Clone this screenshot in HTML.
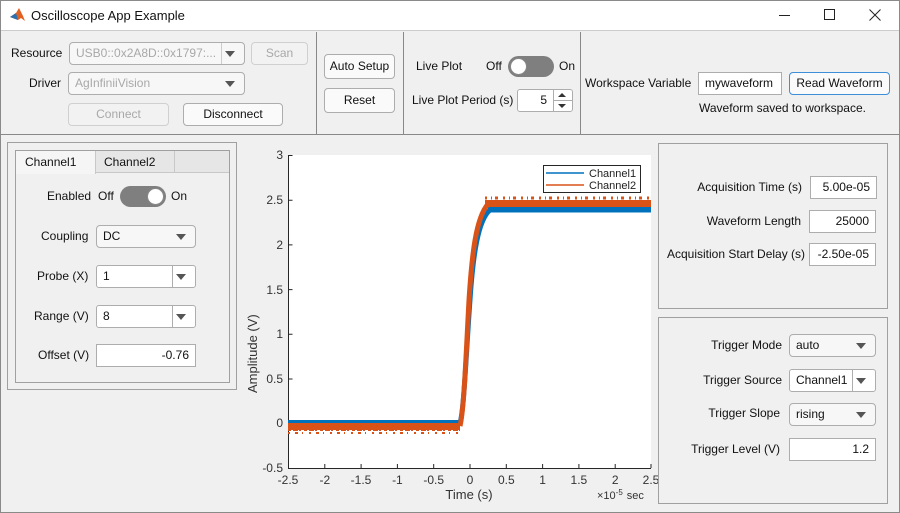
<!DOCTYPE html>
<html><head><style>
*{box-sizing:border-box;margin:0;padding:0}
body{width:900px;height:513px;background:#f0f0f0;font-family:"Liberation Sans",sans-serif;font-size:12px;color:#111;position:relative;overflow:hidden}
.a{position:absolute}
.win{left:0;top:0;width:900px;height:513px;border:1px solid #8a8a8a}
.btn{position:absolute;border:1px solid #adadad;border-radius:4px;background:#fafafa;text-align:center;line-height:21px;height:23px}
.dis{color:#a8a8a8;border-color:#d0d0d0;background:#f2f2f2}
.inp{position:absolute;background:#fff;border:1px solid #adadad;height:23px;line-height:21px;padding:0 6px}
.dd{position:absolute;border:1px solid #adadad;border-radius:4px;background:#f7f7f7;height:23px;line-height:21px;padding-left:6px}
.dd:after{content:"";position:absolute;right:9px;top:8px;border-left:5px solid transparent;border-right:5px solid transparent;border-top:6px solid #555}
.dd.split .sep{position:absolute;right:22px;top:0;bottom:0;border-left:1px solid #adadad}
.dd.white{background:#fff}
.lbl{position:absolute;white-space:nowrap}
.r{text-align:right}
.pan{position:absolute;border:1px solid #a0a0a0}
.tog{position:absolute;width:46px;height:21px;border-radius:11px;background:#7f7f7f}
.tog i{position:absolute;top:2px;width:17px;height:17px;border-radius:50%;background:#fff;border:1px solid #888}
</style></head><body>
<div class="a" style="left:0;top:0;width:900px;height:31px;background:#fff;border-bottom:1px solid #ccc"></div>
<svg class="a" style="left:9px;top:7px" width="17" height="16"><path d="M1 10 L7 6 L10 1 L14 9 L16 14 L12 11 L9 13 Z" fill="#e06020"/><path d="M1 10 L7 6 L9 13 Z" fill="#2a6fb0"/></svg>
<div class="lbl" style="left:31px;top:8px;font-size:13px">Oscilloscope App Example</div>
<div class="a" style="left:779px;top:15px;width:11px;height:1px;background:#222"></div>
<div class="a" style="left:824px;top:9px;width:11px;height:11px;border:1px solid #222"></div>
<svg class="a" style="left:869px;top:9px" width="12" height="12"><path d="M0.5 0.5L11.5 11.5M11.5 0.5L0.5 11.5" stroke="#222" stroke-width="1"/></svg>
<div class="win a"></div>
<div class="a" style="left:1px;top:134px;width:898px;height:1px;background:#888"></div>
<div class="a" style="left:316px;top:32px;width:1px;height:102px;background:#888"></div>
<div class="a" style="left:403px;top:32px;width:1px;height:102px;background:#888"></div>
<div class="a" style="left:580px;top:32px;width:1px;height:102px;background:#888"></div>

<div class="lbl" style="left:11px;top:46px">Resource</div>
<div class="dd dis" style="left:69px;top:42px;width:176px;overflow:hidden">USB0::0x2A8D::0x1797:...<span class="sep" style="position:absolute;right:22px;top:0;bottom:0;border-left:1px solid #ccc"></span></div>
<div class="btn dis" style="left:251px;top:42px;width:57px">Scan</div>
<div class="lbl" style="left:29px;top:76px">Driver</div>
<div class="dd dis" style="left:68px;top:72px;width:177px">AgInfiniiVision</div>
<div class="btn dis" style="left:68px;top:103px;width:101px">Connect</div>
<div class="btn" style="left:183px;top:103px;width:100px">Disconnect</div>

<div class="btn" style="left:324px;top:54px;width:71px;height:25px;line-height:23px">Auto Setup</div>
<div class="btn" style="left:324px;top:88px;width:71px;height:25px;line-height:23px">Reset</div>

<div class="lbl" style="left:416px;top:59px">Live Plot</div>
<div class="lbl" style="left:486px;top:59px">Off</div>
<div class="tog" style="left:508px;top:56px"><i style="left:2px"></i></div>
<div class="lbl" style="left:559px;top:59px">On</div>
<div class="lbl" style="left:412px;top:93px">Live Plot Period (s)</div>
<div class="inp r" style="left:517px;top:89px;width:56px;padding-right:25px;border-radius:3px">5</div>
<div class="a" style="left:553px;top:90px;width:19px;height:21px;border-left:1px solid #adadad"></div>
<div class="a" style="left:553px;top:100px;width:19px;height:1px;background:#adadad"></div>
<div class="a" style="left:558px;top:93px;border-left:4px solid transparent;border-right:4px solid transparent;border-bottom:4px solid #333"></div>
<div class="a" style="left:558px;top:104px;border-left:4px solid transparent;border-right:4px solid transparent;border-top:4px solid #333"></div>

<div class="lbl" style="left:585px;top:76px">Workspace Variable</div>
<div class="inp" style="left:698px;top:72px;width:84px">mywaveform</div>
<div class="btn" style="left:789px;top:72px;width:101px;border-color:#3d8fd8">Read Waveform</div>
<div class="lbl" style="left:699px;top:101px">Waveform saved to workspace.</div>

<div class="pan" style="left:7px;top:142px;width:230px;height:248px"></div>
<div class="pan" style="left:15px;top:150px;width:215px;height:233px"></div>
<div class="a" style="left:16px;top:151px;width:213px;height:22px;background:#e6e6e6;border-bottom:1px solid #c8c8c8"></div>
<div class="a" style="left:16px;top:151px;width:80px;height:23px;background:#f5f5f5;border-right:1px solid #c8c8c8"></div>
<div class="a" style="left:174px;top:151px;width:1px;height:22px;background:#c8c8c8"></div>
<div class="lbl" style="left:25px;top:155px">Channel1</div>
<div class="lbl" style="left:104px;top:155px">Channel2</div>
<div class="lbl" style="left:47px;top:189px">Enabled</div>
<div class="lbl" style="left:98px;top:189px">Off</div>
<div class="tog" style="left:120px;top:186px"><i style="left:27px"></i></div>
<div class="lbl" style="left:171px;top:189px">On</div>
<div class="lbl" style="left:41px;top:229px">Coupling</div>
<div class="dd" style="left:96px;top:225px;width:100px">DC</div>
<div class="lbl" style="left:37px;top:269px">Probe (X)</div>
<div class="dd white split" style="left:96px;top:265px;width:100px;border-radius:3px">1<span class="sep"></span></div>
<div class="lbl" style="left:34px;top:309px">Range (V)</div>
<div class="dd white split" style="left:96px;top:305px;width:100px;border-radius:3px">8<span class="sep"></span></div>
<div class="lbl" style="left:38px;top:348px">Offset (V)</div>
<div class="inp r" style="left:96px;top:344px;width:100px">-0.76</div>

<svg class="a" style="left:240px;top:140px" width="420" height="373" font-family="Liberation Sans" font-size="12" fill="#333">
<rect x="48" y="15" width="363" height="313" fill="#fff"/>
<g stroke="#262626" stroke-width="1" fill="none">
<path d="M48.5 15 V328.5 H411"/>
<path d="M48.5 15.5h4M48.5 60.2h4M48.5 104.9h4M48.5 149.6h4M48.5 194.3h4M48.5 239h4M48.5 283.7h4"/>
<path d="M84.8 328v-4M121.1 328v-4M157.4 328v-4M193.7 328v-4M230 328v-4M266.3 328v-4M302.6 328v-4M338.9 328v-4M375.2 328v-4M411 328v-4"/>
</g>
<g text-anchor="end"><text x="43" y="19">3</text><text x="43" y="64">2.5</text><text x="43" y="109">2</text><text x="43" y="154">1.5</text><text x="43" y="198">1</text><text x="43" y="243">0.5</text><text x="43" y="287">0</text><text x="43" y="332">-0.5</text></g>
<g text-anchor="middle"><text x="48" y="344">-2.5</text><text x="84.8" y="344">-2</text><text x="121" y="344">-1.5</text><text x="157.4" y="344">-1</text><text x="193.7" y="344">-0.5</text><text x="230" y="344">0</text><text x="266.3" y="344">0.5</text><text x="302.6" y="344">1</text><text x="338.9" y="344">1.5</text><text x="375.2" y="344">2</text><text x="411" y="344">2.5</text></g>
<text x="229" y="359" text-anchor="middle" font-size="13">Time (s)</text>
<text x="357" y="359" font-size="11">×10<tspan dy="-4" font-size="8">-5</tspan><tspan dy="4" dx="4">sec</tspan></text>
<text transform="translate(17,253) rotate(-90)" font-size="13">Amplitude (V)</text>
<rect x="48" y="280" width="172" height="7" fill="#0072bd"/>
<path d="M220 283 C224 270 226 215 230 160 C233 115 238 80 250 70 L411 70" stroke="#0072bd" stroke-width="5" fill="none"/>
<rect x="248" y="63" width="163" height="8" fill="#0072bd"/>
<path d="M48 288 H220" stroke="#d95319" stroke-width="6" stroke-dasharray="3 2 5 1 2 3" fill="none"/>
<rect x="48" y="283" width="172" height="7" fill="#d95319"/>
<path d="M48 293 H220" stroke="#d95319" stroke-width="2" stroke-dasharray="2 5 3 4 1 6" fill="none"/>
<path d="M220 286 C224 270 226 215 229 160 C232 113 236 78 248 64 L411 64" stroke="#d95319" stroke-width="5" fill="none"/>
<rect x="245" y="60" width="166" height="7" fill="#d95319"/>
<path d="M245 58 H411" stroke="#d95319" stroke-width="3" stroke-dasharray="2 4 1 3 3 5" fill="none"/>
<rect x="303.5" y="25.5" width="97" height="27" fill="#fff" stroke="#262626"/>
<path d="M306 33h38" stroke="#0072bd" stroke-width="1.5"/><path d="M306 45h38" stroke="#d95319" stroke-width="1.5"/>
<text x="349" y="37" font-size="11" fill="#222">Channel1</text><text x="349" y="49" font-size="11" fill="#222">Channel2</text>
</svg>

<div class="pan" style="left:658px;top:143px;width:230px;height:166px"></div>
<div class="lbl r" style="left:660px;top:180px;width:142px">Acquisition Time (s)</div>
<div class="inp r" style="left:810px;top:176px;width:67px">5.00e-05</div>
<div class="lbl r" style="left:660px;top:214px;width:141px">Waveform Length</div>
<div class="inp r" style="left:809px;top:210px;width:67px">25000</div>
<div class="lbl" style="left:667px;top:247px">Acquisition Start Delay (s)</div>
<div class="inp r" style="left:809px;top:243px;width:67px">-2.50e-05</div>

<div class="pan" style="left:658px;top:317px;width:230px;height:187px"></div>
<div class="lbl r" style="left:660px;top:338px;width:122px">Trigger Mode</div>
<div class="dd" style="left:789px;top:334px;width:87px">auto</div>
<div class="lbl r" style="left:660px;top:373px;width:122px">Trigger Source</div>
<div class="dd white split" style="left:789px;top:369px;width:87px;border-radius:3px">Channel1<span class="sep"></span></div>
<div class="lbl r" style="left:660px;top:406px;width:120px">Trigger Slope</div>
<div class="dd" style="left:789px;top:403px;width:87px">rising</div>
<div class="lbl r" style="left:660px;top:442px;width:120px">Trigger Level (V)</div>
<div class="inp r" style="left:789px;top:438px;width:87px">1.2</div>
</body></html>
